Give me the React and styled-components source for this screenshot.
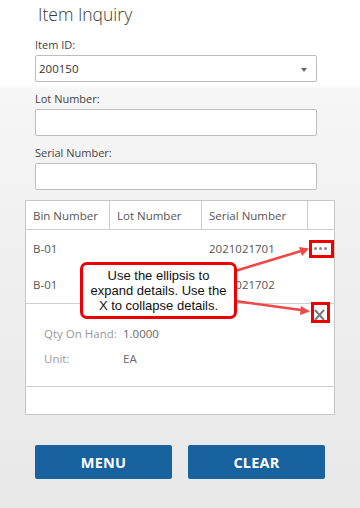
import React from 'react';
import styled, { createGlobalStyle } from 'styled-components';

const GlobalStyle = createGlobalStyle`
  html, body {
    margin: 0;
    padding: 0;
  }
  body {
    width: 360px;
    min-height: 508px;
    font-family: 'Open Sans', 'Noto Sans', sans-serif;
    background: linear-gradient(to bottom, #ffffff 0px, #ffffff 84px, #f6f6f6 90px, #eeeeee 300px, #e8e8e8 508px);
  }
`;

const Page = styled.div`
  width: 360px;
  height: 508px;
  overflow: hidden;
`;

const Title = styled.h1`
  margin: 0;
  height: 28px;
  padding: 3px 0 0 38px;
  box-sizing: border-box;
  font-size: 17.5px;
  line-height: 22px;
  font-weight: 300;
  color: #3a3a3a;
`;

const Field = styled.div`
  padding: 0 0 0 35px;
`;

const Label = styled.label`
  display: block;
  height: 27px;
  padding-top: 10px;
  box-sizing: border-box;
  font-size: 11px;
  line-height: 14px;
  color: #444;
`;

const Box = styled.div`
  position: relative;
  width: 282px;
  height: 27px;
  box-sizing: border-box;
  border: 1px solid #bdbdbd;
  border-radius: 2px;
  background: #fff;
  padding-left: 3px;
  font-size: 11.5px;
  line-height: 25px;
  color: #333;
`;

const Caret = styled.span`
  position: absolute;
  right: 9px;
  top: 12px;
  border-left: 3.5px solid transparent;
  border-right: 3.5px solid transparent;
  border-top: 4px solid #666;
`;

const GridWrap = styled.div`
  position: relative;
  margin: 10px 25px 0;
`;

const Grid = styled.div`
  border: 1px solid #c6c6c6;
  background: #fff;
`;

const Row = styled.div`
  display: grid;
  grid-template-columns: 84px 92px 106px 1fr;
  height: ${(p) => p.$h}px;
  align-items: center;
  border-bottom: ${(p) => (p.$line ? '1px solid #cfcfcf' : 'none')};
  font-size: 11.5px;
  color: #555;
`;

const HeadCell = styled.div`
  height: 100%;
  display: flex;
  align-items: center;
  padding-left: 7px;
  border-right: ${(p) => (p.$last ? 'none' : '1px solid #cfcfcf')};
  color: #555;
`;

const Cell = styled.div`
  padding-left: 7px;
`;

const Dots = styled.div`
  display: flex;
  justify-content: center;
  gap: 2px;
  padding-right: 2px;
  span {
    width: 3px;
    height: 3px;
    border-radius: 50%;
    background: #888;
  }
`;

const Details = styled.div`
  position: relative;
  height: 83px;
  box-sizing: border-box;
  padding: 17px 0 0 18px;
  border-bottom: 1px solid #cfcfcf;
`;

const DetailRow = styled.div`
  display: grid;
  grid-template-columns: 79px 1fr;
  height: 25px;
  align-items: center;
  font-size: 11.5px;
`;

const DetailLabel = styled.span`
  color: #999;
`;

const DetailValue = styled.span`
  color: #666;
`;

const Close = styled.svg`
  position: absolute;
  right: 9px;
  top: 5px;
  display: block;
`;

const Empty = styled.div`
  height: 27px;
`;

const Mark = styled.div`
  position: absolute;
  left: ${(p) => p.$x}px;
  top: ${(p) => p.$y}px;
  width: ${(p) => p.$w}px;
  height: ${(p) => p.$h}px;
  box-sizing: border-box;
  border: 3px solid #ee0000;
`;

const Callout = styled.div`
  position: absolute;
  left: 55px;
  top: 62px;
  width: 157px;
  height: 57px;
  box-sizing: border-box;
  border: 3px solid #ee0000;
  border-radius: 7px;
  background: #fff;
  display: flex;
  align-items: center;
  justify-content: center;
  text-align: center;
  font-family: 'Liberation Sans', Arial, sans-serif;
  font-size: 13px;
  line-height: 15px;
  color: #111;
`;

const Arrows = styled.svg`
  position: absolute;
  left: 0;
  top: 0;
  overflow: visible;
  pointer-events: none;
`;

const Buttons = styled.div`
  display: flex;
  gap: 16px;
  padding: 30px 0 0 35px;
`;

const Button = styled.button`
  width: 137px;
  height: 34px;
  border: none;
  border-radius: 2px;
  background: #17629f;
  color: #fff;
  font-family: 'Open Sans', 'Noto Sans', sans-serif;
  font-weight: 700;
  font-size: 14.5px;
  letter-spacing: 0.2px;
  padding: 0;
`;

const rows = [
  { bin: 'B-01', lot: '', serial: '2021021701', more: true },
  { bin: 'B-01', lot: '', serial: '2021021702', more: false },
];

export default function App() {
  return (
    <Page>
      <GlobalStyle />
      <Title>Item Inquiry</Title>
      <Field>
        <Label>Item ID:</Label>
        <Box>
          200150
          <Caret />
        </Box>
      </Field>
      <Field>
        <Label>Lot Number:</Label>
        <Box />
      </Field>
      <Field>
        <Label>Serial Number:</Label>
        <Box />
      </Field>

      <GridWrap>
        <Grid>
          <Row $h={28} $line>
            <HeadCell>Bin Number</HeadCell>
            <HeadCell>Lot Number</HeadCell>
            <HeadCell>Serial Number</HeadCell>
            <HeadCell $last />
          </Row>
          {rows.map((r, i) => (
            <Row key={i} $h={i === 1 ? 37 : 36} $line={i === 1}>
              <Cell>{r.bin}</Cell>
              <Cell>{r.lot}</Cell>
              <Cell>{r.serial}</Cell>
              {r.more ? (
                <Dots>
                  <span />
                  <span />
                  <span />
                </Dots>
              ) : (
                <Cell />
              )}
            </Row>
          ))}
          <Details>
            <Close width="11" height="12" viewBox="0 0 11 12">
              <path d="M1 1 L10 11 M10 1 L1 11" stroke="#7a7a7a" strokeWidth="2" />
            </Close>
            <DetailRow>
              <DetailLabel>Qty On Hand:</DetailLabel>
              <DetailValue>1.0000</DetailValue>
            </DetailRow>
            <DetailRow>
              <DetailLabel>Unit:</DetailLabel>
              <DetailValue>EA</DetailValue>
            </DetailRow>
          </Details>
          <Empty />
        </Grid>

        <Mark $x={284} $y={40} $w={25} $h={18} />
        <Mark $x={286} $y={102} $w={19} $h={21} />
        <Arrows width="310" height="212">
          <path d="M210 71 L276 51" stroke="#f24848" strokeWidth="2.5" />
          <path d="M284 48.5 L274 47 L277 56 Z" fill="#f24848" />
          <path d="M210 101 L276 110" stroke="#f24848" strokeWidth="2.5" />
          <path d="M285 111.5 L276 106 L275 115 Z" fill="#f24848" />
        </Arrows>
        <Callout>
          Use the ellipsis to
          <br />
          expand details. Use the
          <br />
          X to collapse details.
        </Callout>
      </GridWrap>

      <Buttons>
        <Button>MENU</Button>
        <Button>CLEAR</Button>
      </Buttons>
    </Page>
  );
}
